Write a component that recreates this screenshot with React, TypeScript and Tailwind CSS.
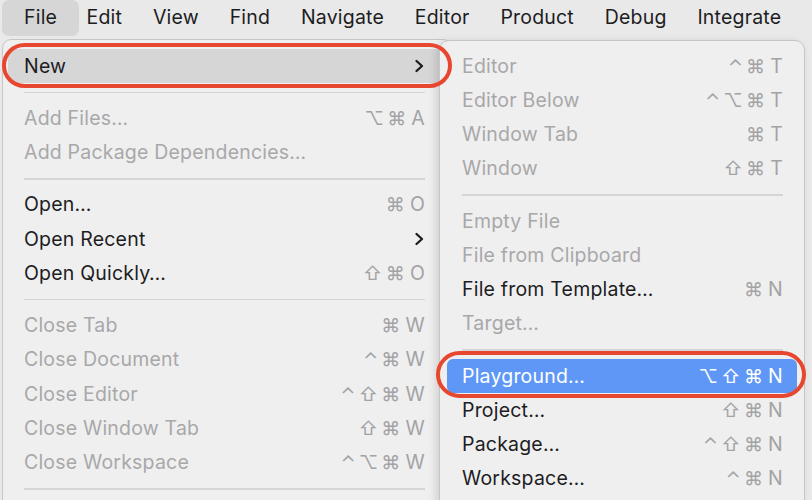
import React from "react";

type Item =
  | { kind: "sep" }
  | {
      kind: "item";
      label: string;
      keys?: string[];
      disabled?: boolean;
      submenu?: boolean;
      active?: "gray" | "blue";
    };

const menuBar = [
  "File",
  "Edit",
  "View",
  "Find",
  "Navigate",
  "Editor",
  "Product",
  "Debug",
  "Integrate",
];

const fileMenu: Item[] = [
  { kind: "item", label: "New", submenu: true, active: "gray" },
  { kind: "sep" },
  { kind: "item", label: "Add Files…", keys: ["⌥", "⌘", "A"], disabled: true },
  { kind: "item", label: "Add Package Dependencies…", disabled: true },
  { kind: "sep" },
  { kind: "item", label: "Open…", keys: ["⌘", "O"] },
  { kind: "item", label: "Open Recent", submenu: true },
  { kind: "item", label: "Open Quickly…", keys: ["⇧", "⌘", "O"] },
  { kind: "sep" },
  { kind: "item", label: "Close Tab", keys: ["⌘", "W"], disabled: true },
  { kind: "item", label: "Close Document", keys: ["⌃", "⌘", "W"], disabled: true },
  { kind: "item", label: "Close Editor", keys: ["⌃", "⇧", "⌘", "W"], disabled: true },
  { kind: "item", label: "Close Window Tab", keys: ["⇧", "⌘", "W"], disabled: true },
  { kind: "item", label: "Close Workspace", keys: ["⌃", "⌥", "⌘", "W"], disabled: true },
  { kind: "sep" },
];

const newMenu: Item[] = [
  { kind: "item", label: "Editor", keys: ["⌃", "⌘", "T"], disabled: true },
  { kind: "item", label: "Editor Below", keys: ["⌃", "⌥", "⌘", "T"], disabled: true },
  { kind: "item", label: "Window Tab", keys: ["⌘", "T"], disabled: true },
  { kind: "item", label: "Window", keys: ["⇧", "⌘", "T"], disabled: true },
  { kind: "sep" },
  { kind: "item", label: "Empty File", disabled: true },
  { kind: "item", label: "File from Clipboard", disabled: true },
  { kind: "item", label: "File from Template…", keys: ["⌘", "N"] },
  { kind: "item", label: "Target…", disabled: true },
  { kind: "sep" },
  { kind: "item", label: "Playground…", keys: ["⌥", "⇧", "⌘", "N"], active: "blue" },
  { kind: "item", label: "Project…", keys: ["⇧", "⌘", "N"] },
  { kind: "item", label: "Package…", keys: ["⌃", "⇧", "⌘", "N"] },
  { kind: "item", label: "Workspace…", keys: ["⌃", "⌘", "N"] },
];

function Chevron() {
  return (
    <svg width="10" height="14" viewBox="0 0 10 14" className="mr-[1px]">
      <polyline
        points="2.5,2 8,7 2.5,12"
        fill="none"
        stroke="#1d1d1f"
        strokeWidth="2.3"
        strokeLinecap="round"
        strokeLinejoin="round"
      />
    </svg>
  );
}

function Row({
  item,
  inset,
}: {
  item: Item;
  inset: { mx: string; pl: string; pr: string; sep: string };
}) {
  if (item.kind === "sep") {
    return (
      <div className={`h-[18px] flex items-center ${inset.sep}`}>
        <div className="h-[1.5px] w-full bg-[#d5d5d6]" />
      </div>
    );
  }

  const blue = item.active === "blue";
  const bg =
    item.active === "gray"
      ? "bg-[#d6d6d7]"
      : blue
        ? "bg-[#5e97f6]"
        : "";
  const text = blue
    ? "text-white"
    : item.disabled
      ? "text-[#a8a8a9]"
      : "text-[#1d1d1f]";
  const keyColor = blue ? "text-white" : "text-[#a3a3a4]";

  return (
    <div
      className={`h-[34.25px] flex items-center justify-between rounded-[6px] ${inset.mx} ${inset.pl} ${inset.pr} ${bg}`}
    >
      <span className={`${text} whitespace-nowrap`}>{item.label}</span>
      {item.submenu && <Chevron />}
      {item.keys && (
        <span
          className={`flex items-center gap-[3px] ${keyColor}`}
          style={{ fontFamily: '"Inter", "DejaVu Sans", sans-serif' }}
        >
          {item.keys.map((k, i) => (
            <span
              key={i}
              className={
                i === item.keys!.length - 1
                  ? "text-[19.5px] ml-[2px]"
                  : "text-[19px] leading-none"
              }
            >
              {k}
            </span>
          ))}
        </span>
      )}
    </div>
  );
}

export default function App() {
  return (
    <div
      className="relative w-[812px] h-[500px] overflow-hidden bg-[#e9e9ea] text-[19.5px] tracking-[0.2px]"
      style={{ fontFamily: '"Inter", "Liberation Sans", sans-serif' }}
    >
      {/* MENU BAR */}
      <div className="flex h-[38px] items-start text-[#1d1d1f]">
        {menuBar.map((m, i) => (
          <div
            key={m}
            className={
              i === 0
                ? "ml-[2px] -mr-[8px] h-[36px] flex items-center pl-[22px] pr-[22px] rounded-[7px] bg-[#d6d6d7] pb-[1px]"
                : "h-[36px] flex items-center px-[15.4px] pb-[1px]"
            }
          >
            {m}
          </div>
        ))}
      </div>

      {/* MENUS */}
      <div className="flex items-start">
        <div className="ml-[2px] mt-[1px] w-[450px] h-[480px] bg-[#efeff0] border border-[#c6c6c7] rounded-t-[9px] pt-[9px]">
          {fileMenu.map((it, i) => (
            <Row
              key={i}
              item={it}
              inset={{
                mx: "mx-[5px]",
                pl: "pl-[16px]",
                pr: "pr-[21px]",
                sep: "ml-[21px] mr-[26px]",
              }}
            />
          ))}
        </div>

        <div className="relative -ml-[13px] mt-[2px] w-[366px] h-[480px] bg-[#efeff0] border border-[#c6c6c7] rounded-t-[10px] pt-[8px] shadow-[-3px_2px_8px_rgba(0,0,0,0.13)]">
          {newMenu.map((it, i) => (
            <Row
              key={i}
              item={it}
              inset={{
                mx: "mx-[7px]",
                pl: "pl-[15px]",
                pr: "pr-[14px]",
                sep: "ml-[22px] mr-[21px]",
              }}
            />
          ))}
        </div>
      </div>

      {/* RED CALLOUTS */}
      <div className="absolute left-[2px] top-[43px] w-[450px] h-[45px] rounded-full border-[4px] border-[#e8472f]" />
      <div className="absolute left-[436px] top-[351px] w-[370px] h-[47px] rounded-full border-[4px] border-[#e8472f]" />
    </div>
  );
}
